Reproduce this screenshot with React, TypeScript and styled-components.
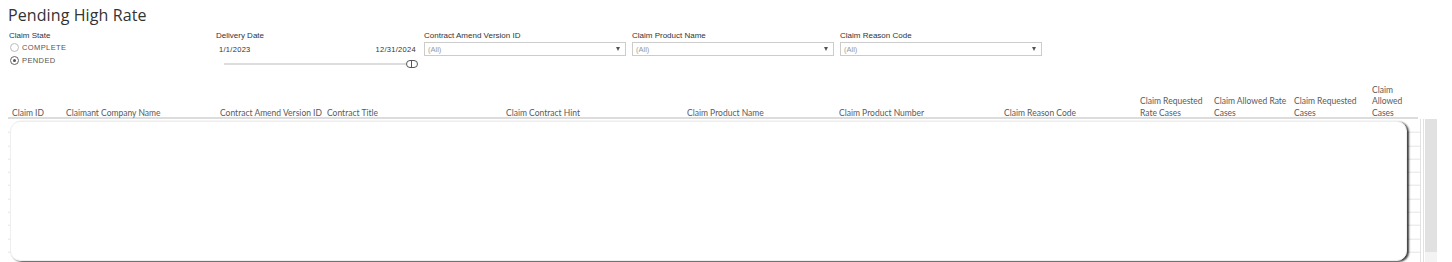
import React from 'react';
import styled, { createGlobalStyle } from 'styled-components';

const GlobalStyle = createGlobalStyle`
    html, body {
        margin: 0;
        padding: 0;
        background: #ffffff;
        overflow: hidden;
    }
`;

const Page = styled.div`
    width: 1452px;
    height: 262px;
    display: flex;
    flex-direction: column;
    box-sizing: border-box;
    padding: 4px 0 0 0;
    font-family: "Liberation Sans", Arial, sans-serif;
`;

const Title = styled.div`
    padding-left: 8px;
    height: 23px;
    font-family: "Open Sans", "Noto Sans", sans-serif;
    font-size: 16px;
    line-height: 23px;
    color: #333333;
    letter-spacing: 0.1px;
`;

const FilterRow = styled.div`
    display: flex;
    flex-direction: row;
    padding-left: 9px;
    margin-top: 4px;
    height: 49px;
`;

const FilterBlock = styled.div<{ width: number }>`
    width: ${({ width }) => width}px;
    display: flex;
    flex-direction: column;
    flex-shrink: 0;
`;

const FilterLabel = styled.div`
    font-size: 8px;
    line-height: 10px;
    height: 10px;
    color: #333333;
`;

const RadioRow = styled.div`
    display: flex;
    flex-direction: row;
    align-items: center;
    gap: 3px;
    height: 13px;
    padding-left: 1px;
    font-size: 7.5px;
    letter-spacing: 0.4px;
    color: #555555;
`;

const RadioCircle = styled.span<{ checked: boolean }>`
    width: 7px;
    height: 7px;
    border-radius: 50%;
    border: 1px solid ${({ checked }) => (checked ? '#666666' : '#bbbbbb')};
    display: flex;
    align-items: center;
    justify-content: center;
    &::after {
        content: '';
        width: 3px;
        height: 3px;
        border-radius: 50%;
        background: ${({ checked }) => (checked ? '#555555' : 'transparent')};
    }
`;

const DateRow = styled.div`
    display: flex;
    flex-direction: row;
    justify-content: space-between;
    padding: 0 8px 0 3px;
    margin-top: 4px;
    font-size: 7.5px;
    letter-spacing: 0.3px;
    line-height: 10px;
    color: #333333;
`;

const SliderRow = styled.div`
    display: flex;
    flex-direction: row;
    align-items: center;
    padding-left: 8px;
    margin-top: 4px;
    height: 10px;
`;

const SliderTrack = styled.div`
    flex: 1;
    height: 2px;
    background: #dddddd;
`;

const SliderHandle = styled.div`
    width: 12px;
    height: 8px;
    border: 1px solid #555555;
    border-radius: 5px;
    box-sizing: border-box;
    position: relative;
    margin-right: 6px;
    background: #ffffff;
    &::after {
        content: '';
        position: absolute;
        left: 4px;
        top: -1px;
        width: 1px;
        height: 8px;
        background: #555555;
    }
`;

const Dropdown = styled.div`
    margin-top: 1px;
    width: 202px;
    height: 14px;
    box-sizing: border-box;
    border: 1px solid #cccccc;
    display: flex;
    flex-direction: row;
    align-items: center;
    justify-content: space-between;
    padding: 0 5px 0 3px;
    font-size: 7.5px;
    color: #999999;
`;

const Arrow = styled.span`
    width: 0;
    height: 0;
    border-left: 2.5px solid transparent;
    border-right: 2.5px solid transparent;
    border-top: 4px solid #555555;
`;

const TableHeader = styled.div`
    display: flex;
    flex-direction: row;
    align-items: flex-end;
    height: 37px;
    margin-top: 2px;
    margin-left: 8px;
    padding-left: 4px;
    border-bottom: 2px solid #dcdcdc;
    width: 1410px;
    box-sizing: border-box;
`;

const HeaderCell = styled.div<{ width: number }>`
    width: ${({ width }) => width}px;
    flex-shrink: 0;
    margin-bottom: -2px;
    font-family: Lato, "Open Sans", sans-serif;
    font-size: 8.5px;
    line-height: 11.5px;
    color: #5a5a5a;
`;

const BodyRow = styled.div`
    display: flex;
    flex-direction: row;
    flex: 1;
    padding-left: 8px;
`;

const GridArea = styled.div`
    width: 1413px;
    height: 100%;
    box-sizing: border-box;
    padding: 2px 13px 1px 2px;
    border-right: 1px solid #e2e2e2;
    background-image: repeating-linear-gradient(
        to bottom,
        transparent 0px,
        transparent 12.3px,
        #e4e4e4 12.3px,
        #e4e4e4 13.3px
    );
    background-position: 0 0.7px;
`;

const Card = styled.div`
    height: 100%;
    background: #ffffff;
    border-radius: 10px;
    box-shadow: 2px 1px 2px rgba(0, 0, 0, 0.75);
    border: 1px solid #eeeeee;
    box-sizing: border-box;
`;

const GapLine = styled.div`
    width: 2px;
    border-right: 1px solid #e2e2e2;
`;

const Scrollbar = styled.div`
    width: 12px;
    margin-left: 1px;
    display: flex;
    flex-direction: column;
`;

const ScrollThumb = styled.div`
    flex: 1;
    background: #e1e1e1;
`;

const ScrollEnd = styled.div`
    height: 10px;
    background: #f3f3f3;
`;

const columns: { label: React.ReactNode; width: number }[] = [
    { label: 'Claim ID', width: 54 },
    { label: 'Claimant Company Name', width: 154 },
    { label: 'Contract Amend Version ID', width: 107 },
    { label: 'Contract Title', width: 179 },
    { label: 'Claim Contract Hint', width: 181 },
    { label: 'Claim Product Name', width: 152 },
    { label: 'Claim Product Number', width: 165 },
    { label: 'Claim Reason Code', width: 136 },
    { label: <>Claim Requested<br />Rate Cases</>, width: 74 },
    { label: <>Claim Allowed Rate<br />Cases</>, width: 80 },
    { label: <>Claim Requested<br />Cases</>, width: 78 },
    { label: <>Claim<br />Allowed<br />Cases</>, width: 40 },
];

const dropdownFilters = ['Contract Amend Version ID', 'Claim Product Name', 'Claim Reason Code'];

const App: React.FC = () => {
    return (
        <Page>
            <GlobalStyle />
            <Title>Pending High Rate</Title>

            <FilterRow>
                <FilterBlock width={207}>
                    <FilterLabel>Claim State</FilterLabel>
                    <RadioRow>
                        <RadioCircle checked={false} />
                        COMPLETE
                    </RadioRow>
                    <RadioRow>
                        <RadioCircle checked />
                        PENDED
                    </RadioRow>
                </FilterBlock>

                <FilterBlock width={208}>
                    <FilterLabel>Delivery Date</FilterLabel>
                    <DateRow>
                        <span>1/1/2023</span>
                        <span>12/31/2024</span>
                    </DateRow>
                    <SliderRow>
                        <SliderTrack />
                        <SliderHandle />
                    </SliderRow>
                </FilterBlock>

                {dropdownFilters.map((f) => (
                    <FilterBlock width={208} key={f}>
                        <FilterLabel>{f}</FilterLabel>
                        <Dropdown>
                            <span>(All)</span>
                            <Arrow />
                        </Dropdown>
                    </FilterBlock>
                ))}
            </FilterRow>

            <TableHeader>
                {columns.map((c, i) => (
                    <HeaderCell width={c.width} key={i}>{c.label}</HeaderCell>
                ))}
            </TableHeader>

            <BodyRow>
                <GridArea>
                    <Card />
                </GridArea>
                <GapLine />
                <Scrollbar>
                    <ScrollThumb />
                    <ScrollEnd />
                </Scrollbar>
            </BodyRow>
        </Page>
    );
};

export default App;
